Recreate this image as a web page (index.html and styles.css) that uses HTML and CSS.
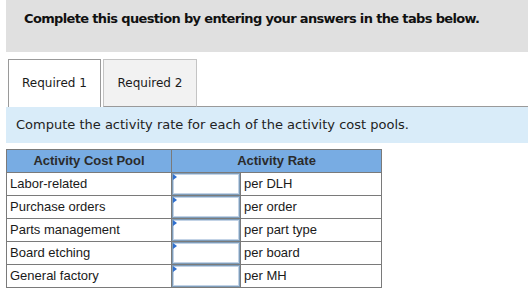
FILE: index.html
```html
<!DOCTYPE html>
<html lang="en">
<head>
    <meta charset="UTF-8">
    <title>Required 1</title>
    <link rel="stylesheet" href="styles.css">
</head>
<body>
    <div class="prompt">Complete this question by entering your answers in the tabs below.</div>

    <div class="tabs">
        <div class="tab tab-active">Required 1</div>
        <div class="tab">Required 2</div>
        <div class="tab-fill"></div>
    </div>

    <div class="instruction">Compute the activity rate for each of the activity cost pools.</div>

    <table class="rates">
        <colgroup>
            <col class="col-pool">
            <col class="col-input">
            <col class="col-unit">
        </colgroup>
        <thead>
            <tr>
                <th>Activity Cost Pool</th>
                <th colspan="2">Activity Rate</th>
            </tr>
        </thead>
        <tbody>
            <tr>
                <td>Labor-related</td>
                <td class="cell-input"><div class="answer"><input type="text"></div></td>
                <td>per DLH</td>
            </tr>
            <tr>
                <td>Purchase orders</td>
                <td class="cell-input"><div class="answer"><input type="text"></div></td>
                <td>per order</td>
            </tr>
            <tr>
                <td>Parts management</td>
                <td class="cell-input"><div class="answer"><input type="text"></div></td>
                <td>per part type</td>
            </tr>
            <tr>
                <td>Board etching</td>
                <td class="cell-input"><div class="answer"><input type="text"></div></td>
                <td>per board</td>
            </tr>
            <tr>
                <td>General factory</td>
                <td class="cell-input"><div class="answer"><input type="text"></div></td>
                <td>per MH</td>
            </tr>
        </tbody>
    </table>
</body>
</html>
```

FILE: styles.css
```css
:root {
    --prompt-bg: #e0e0e0;
    --info-bg: #d9ecf9;
    --head-bg: #78ace3;
    --grid-color: #7a7a7a;
    --text-color: #1a1a1a;
}

* {
    margin: 0;
    padding: 0;
    box-sizing: border-box;
}

body {
    font-family: "DejaVu Sans", Verdana, sans-serif;
    color: var(--text-color);
    background: #ffffff;
}

.prompt {
    margin-left: 6px;
    height: 52px;
    padding: 11px 0 0 18px;
    background-color: var(--prompt-bg);
    font-size: 13px;
    font-weight: bold;
    letter-spacing: -0.65px;
    color: #111;
}

.tabs {
    display: flex;
    align-items: flex-end;
    margin-top: 7px;
    padding-left: 8px;
}

.tab {
    width: 94px;
    height: 48px;
    margin-left: 2px;
    padding-top: 16px;
    text-align: center;
    font-size: 12px;
    background-color: #f2f2f2;
    border: 1px solid #c4c4c4;
    border-bottom-color: #9a9a9a;
}

.tab-active {
    width: 93px;
    margin-left: 0;
    background-color: #ffffff;
    border-color: #9a9a9a;
    border-bottom: none;
}

.tab-fill {
    flex: 1;
    border-bottom: 1px solid #9a9a9a;
}

.instruction {
    margin-left: 6px;
    height: 36px;
    padding: 10px 0 0 10px;
    background-color: var(--info-bg);
    font-size: 13px;
    color: #222;
}

.rates {
    margin: 6px 0 0 6px;
    width: 376px;
    table-layout: fixed;
    border-collapse: collapse;
    font-family: "Liberation Sans", Arial, sans-serif;
    font-size: 13px;
}

.col-pool {
    width: 165px;
}

.col-input {
    width: 69px;
}

.rates th,
.rates td {
    height: 23px;
    border: 1px solid var(--grid-color);
    padding: 0 3px 1px;
    text-align: left;
    white-space: nowrap;
}

.rates th {
    background-color: var(--head-bg);
    color: #2b2b2b;
    text-align: center;
}

.rates .cell-input {
    padding: 0;
}

.answer {
    position: relative;
    height: 22px;
}

.answer input {
    display: block;
    width: 100%;
    height: 100%;
    border: 1px solid #7f9db9;
    box-shadow: inset 0 0 0 1px #c3d3e6;
    background: #ffffff;
    font-size: 13px;
}

.answer::before {
    content: '';
    position: absolute;
    left: 1px;
    top: 1px;
    border-top: 3px solid transparent;
    border-bottom: 3px solid transparent;
    border-left: 4px solid #2f6fcf;
}
```
